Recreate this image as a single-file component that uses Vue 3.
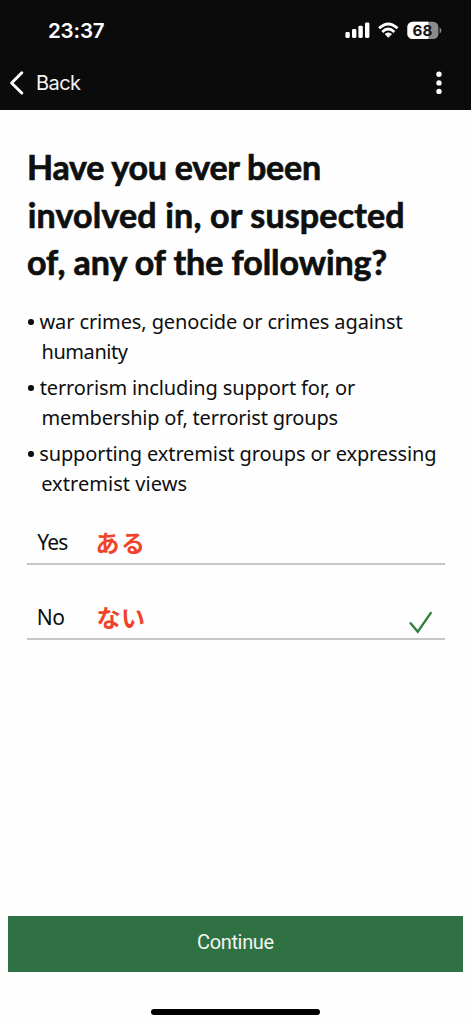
<script setup>
import { nextTick, onMounted } from 'vue'

const heading = [
  { text: 'Have you ever been', ink: [29, 321.5] },
  { text: 'involved in, or suspected', ink: [28.7, 404] },
  { text: 'of, any of the following?', ink: [28, 388] },
]
const bullets = [
  [
    { text: 'war crimes, genocide or crimes against', ink: [39.5, 402.5] },
    { text: 'humanity', ink: [42.5, 128.8] },
  ],
  [
    { text: 'terrorism including support for, or', ink: [39.7, 355] },
    { text: 'membership of, terrorist groups', ink: [42.5, 337.5] },
  ],
  [
    { text: 'supporting extremist groups or expressing', ink: [40.2, 435.2] },
    { text: 'extremist views', ink: [42.2, 186.5] },
  ],
]
const options = [
  { label: 'Yes', ink: [37.3, 68.3], note: 'ある', noteInk: [97.5, 143], checked: false },
  { label: 'No', ink: [38.8, 64.2], note: 'ない', noteInk: [97.5, 144], checked: true },
]

// Tracks a line of text so that its first and last strokes land on the given edges.
function fit(el, [left, right]) {
  const style = getComputedStyle(el)
  const ctx = document.createElement('canvas').getContext('2d')
  ctx.font = `${style.fontWeight} ${style.fontSize} ${style.fontFamily}`
  const m = ctx.measureText(el.textContent)
  const width = m.actualBoundingBoxRight + m.actualBoundingBoxLeft
  const gaps = [...el.textContent].length - 1
  el.style.letterSpacing = `${(right - left - width) / gaps}px`
  const start = el.getBoundingClientRect().left
  el.style.marginLeft = `${left + m.actualBoundingBoxLeft - start}px`
}
const vFit = {
  mounted(el, binding) {
    nextTick(() => fit(el, binding.value))
  },
}
onMounted(() => {
  document.title = 'Question'
})
</script>

<template>
  <div class="screen">
    <header>
      <div class="status">
        <div><span v-fit="[49, 103.8]" class="time">23:37</span></div>
        <svg class="indicators" width="98" height="20" viewBox="0 0 98 20">
          <g fill="#fff">
            <rect x="0.4" y="12" width="4.4" height="6" rx="1.4" />
            <rect x="7" y="9" width="4.4" height="9" rx="1.4" />
            <rect x="13.4" y="5.8" width="4.4" height="12.2" rx="1.4" />
            <rect x="20" y="2.5" width="4.4" height="15.5" rx="1.4" />
            <path d="M43.3 17.4 40 14Q43.3 11.4 46.6 14Z" stroke="#fff" stroke-width=".6" stroke-linejoin="round" />
          </g>
          <g fill="none" stroke="#fff" stroke-width="2.8">
            <path d="M34.1 8.3Q43.3-.4 52.5 8.3" />
            <path d="M37.3 11.9Q43.3 6.2 49.3 11.9" />
          </g>
          <clipPath id="cell"><rect x="62.4" y="1.7" width="31" height="17.4" rx="5.2" /></clipPath>
          <g clip-path="url(#cell)">
            <rect x="62" y="1" width="32" height="19" fill="#8b8b8b" />
            <rect x="62" y="1" width="21.3" height="19" fill="#fff" />
          </g>
          <path d="M94.6 7.4Q96.4 8.4 96.4 10.4T94.6 13.4Z" fill="#8b8b8b" />
          <text x="77.4" y="15.8" text-anchor="middle" class="level">68</text>
        </svg>
      </div>
      <nav>
        <svg class="chevron" width="16" height="26" viewBox="0 0 16 26">
          <path d="M13.8 2.8 3.6 13l10.2 10" fill="none" stroke="#fff" stroke-width="3" stroke-linecap="round" stroke-linejoin="round" />
        </svg>
        <div class="back"><span v-fit="[37, 81]">Back</span></div>
        <svg class="more" width="8" height="26" viewBox="0 0 8 26" fill="#fff">
          <circle cx="4" cy="4.3" r="2.7" />
          <circle cx="4" cy="12.9" r="2.7" />
          <circle cx="4" cy="21.4" r="2.7" />
        </svg>
      </nav>
    </header>

    <main>
      <h1>
        <div v-for="line in heading" :key="line.text"><span v-fit="line.ink">{{ line.text }}</span></div>
      </h1>
      <ul>
        <li v-for="(item, i) in bullets" :key="i">
          <i class="dot"></i>
          <div v-for="line in item" :key="line.text"><span v-fit="line.ink">{{ line.text }}</span></div>
        </li>
      </ul>
      <div class="options">
        <div v-for="o in options" :key="o.label" class="option">
          <div class="label"><span v-fit="o.ink">{{ o.label }}</span></div>
          <div class="note"><span v-fit="o.noteInk">{{ o.note }}</span></div>
          <svg v-if="o.checked" class="check" width="26" height="26" viewBox="0 0 26 26">
            <path d="M2.6 12.2 9.8 20.8 22.8 1.9" fill="none" stroke="#31813f" stroke-width="2.4" stroke-linecap="round" />
          </svg>
        </div>
      </div>
    </main>

    <footer>
      <button><span v-fit="[198, 273.5]">Continue</span></button>
      <div class="home"></div>
    </footer>
  </div>
</template>

<style>
body { margin: 0; background: #fefefe; }
</style>

<style scoped>
.screen {
  display: flex;
  flex-direction: column;
  height: 1024px;
  overflow: hidden;
  color: #0e0f0f;
  font-family: "Noto Sans", "Noto Sans CJK JP", sans-serif;
  font-kerning: normal;
}
span { display: inline-block; white-space: nowrap; }
header {
  box-sizing: border-box;
  height: 109.5px;
  background: #0b0b0b;
  color: #fff;
  font-family: Inter, sans-serif;
}
.status { display: flex; height: 61px; line-height: 61px; }
.status > div { width: 345px; }
.time { font-size: 20.5px; font-weight: 600; }
.indicators { margin-top: 20px; }
.level { font: 700 15.2px Inter, sans-serif; fill: #151515; }
nav { display: flex; height: 44px; line-height: 44px; font-size: 20px; }
.chevron { margin: 9px 0 0 8px; }
.back { flex: 1; color: #f4f4f4; }
.more { margin: 9px 28px 0 0; }
main { padding: 33.5px 26px 0 27px; }
h1 {
  margin: 0;
  font-family: Lato, sans-serif;
  font-size: 34px;
  line-height: 47.5px;
  font-weight: 700;
  -webkit-text-stroke: 0.7px #0e0f0f;
}
h1 div { height: 47.5px; }
ul {
  display: flex;
  flex-direction: column;
  gap: 6px;
  margin: 21.5px 0 0;
  padding: 0;
  list-style: none;
  font-size: 20px;
  line-height: 30px;
}
li { position: relative; }
li > div { height: 30px; }
.dot {
  position: absolute;
  left: 1px;
  top: 12px;
  width: 5.5px;
  height: 5.5px;
  border-radius: 50%;
  background: #0e0f0f;
}
.options { margin-top: -9px; }
.option {
  display: flex;
  box-sizing: border-box;
  height: 75px;
  padding-top: 31px;
  border-bottom: 2px solid #c6c6c6;
  font-size: 21px;
  line-height: 43px;
}
.label { width: 60px; }
.note {
  flex: 1;
  color: #f0432a;
  font-family: "Noto Sans CJK JP", sans-serif;
  font-size: 24px;
  line-height: 41px;
  font-weight: 700;
}
.check { margin: 15px 11px 0 0; }
footer { margin-top: auto; padding: 0 8px 9px; }
button {
  display: block;
  width: 455px;
  height: 56px;
  padding: 0 0 4px;
  border: 0;
  background: #307143;
  color: #f0f5f1;
  font: 20px/52px Roboto, sans-serif;
  text-align: left;
}
.home {
  width: 169px;
  height: 6px;
  margin: 37px auto 0;
  border-radius: 3px;
  background: #000;
}
</style>
